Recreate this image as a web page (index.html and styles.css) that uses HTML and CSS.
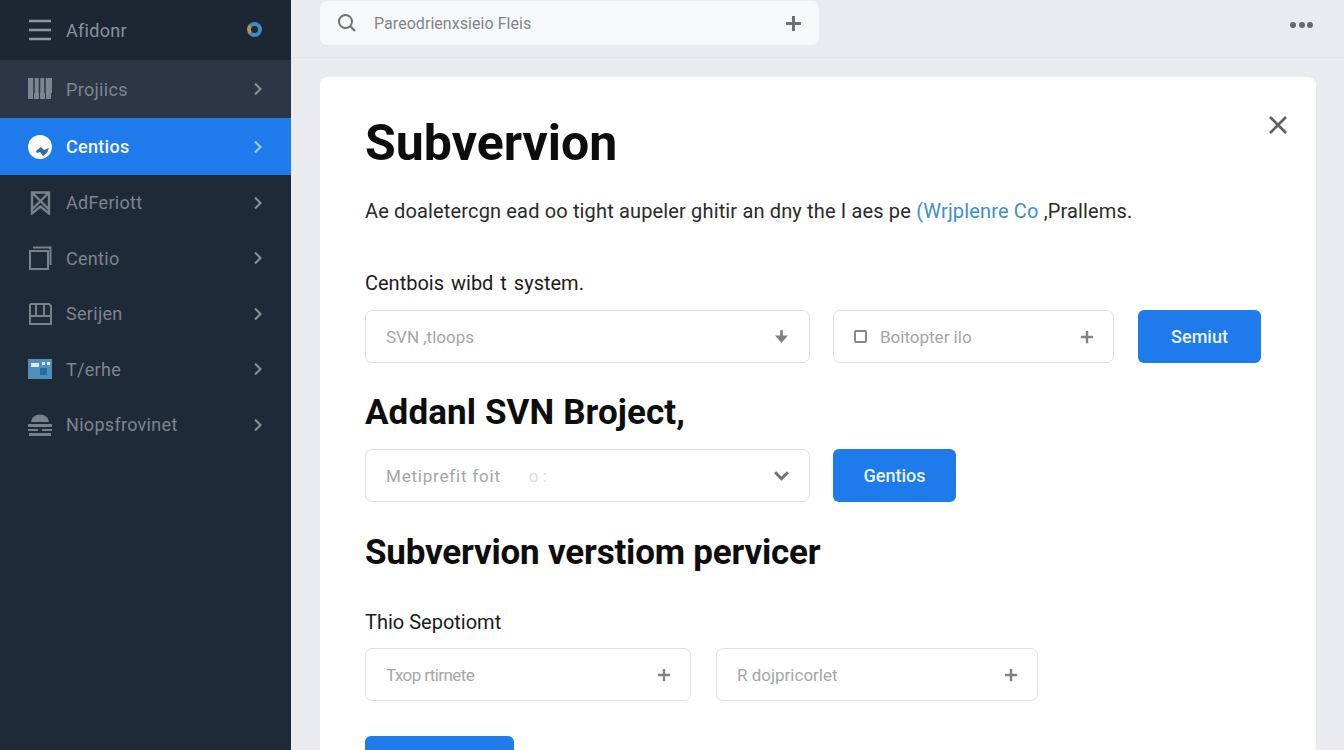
FILE: index.html
```html
<!DOCTYPE html>
<html lang="en">
<head>
    <meta charset="UTF-8">
    <meta name="viewport" content="width=device-width, initial-scale=1.0">
    <title>Subvervion</title>
    <link rel="stylesheet" href="styles.css">
</head>
<body>
    <div class="app">
        <aside class="sidebar">
            <div class="brand">
                <svg class="nav-icon" viewBox="0 0 24 24"><path d="M1 3h22M1 12h22M1 21h22" fill="none" stroke="#8f979f" stroke-width="2.4"/></svg>
                <span class="brand-name">Afidonr</span>
                <span class="brand-dot"></span>
            </div>
            <a class="nav-item projects">
                <svg class="nav-icon" viewBox="0 0 24 24"><path d="M0 1h24v15h-1v6h-5v-6h-1v6h-5v-6h-1v6H6v-6H5v6H0z" fill="#7d858e"/><path d="M6 1v15M11.500 1v15M17 1v15" stroke="#2f3a47" stroke-width="1.600"/></svg>
                <span class="nav-label">Projiics</span>
                <svg class="chev" viewBox="0 0 10 14"><path d="M2 1.500 7.500 7 2 12.500" /></svg>
            </a>
            <a class="nav-item active">
                <svg class="nav-icon" viewBox="0 0 24 24"><circle cx="12" cy="12" r="12" fill="#fff"/><path d="M8 16l5-4 3 3 5-2-2 5-4 3-3-4-3 1z" fill="#2a6f9e"/></svg>
                <span class="nav-label">Centios</span>
                <svg class="chev" viewBox="0 0 10 14"><path d="M2 1.500 7.500 7 2 12.500" /></svg>
            </a>
            <a class="nav-item">
                <svg class="nav-icon" viewBox="0 0 24 24"><path d="M4 1.500h17v21l-8.500-7-8.500 7zM4 1.500l17 17M21 1.500 4 18.500" fill="none" stroke="#79828b" stroke-width="2.400"/></svg>
                <span class="nav-label">AdFeriott</span>
                <svg class="chev" viewBox="0 0 10 14"><path d="M2 1.500 7.500 7 2 12.500" /></svg>
            </a>
            <a class="nav-item">
                <svg class="nav-icon" viewBox="0 0 24 24"><path d="M2 5h18v18H2zM5 1.500h17.500V19" fill="none" stroke="#79828b" stroke-width="2"/></svg>
                <span class="nav-label">Centio</span>
                <svg class="chev" viewBox="0 0 10 14"><path d="M2 1.500 7.500 7 2 12.500" /></svg>
            </a>
            <a class="nav-item">
                <svg class="nav-icon" viewBox="0 0 24 24"><path d="M3 2h18l2 2v18H2V3zM2 14h21M8 2v12M16 2v12" fill="none" stroke="#79828b" stroke-width="2"/></svg>
                <span class="nav-label">Serijen</span>
                <svg class="chev" viewBox="0 0 10 14"><path d="M2 1.500 7.500 7 2 12.500" /></svg>
            </a>
            <a class="nav-item">
                <svg class="nav-icon" viewBox="0 0 24 24"><path d="M0 2h24v20H0z" fill="#4f8fb8"/><path d="M3 6h8v4H3zM14 5h3v3h-3zM19 5h3v3h-3z" fill="#dfe6ea"/><path d="M12 11h7v7h-7z" fill="#1f6fa8"/></svg>
                <span class="nav-label">T/erhe</span>
                <svg class="chev" viewBox="0 0 10 14"><path d="M2 1.500 7.500 7 2 12.500" /></svg>
            </a>
            <a class="nav-item">
                <svg class="nav-icon" viewBox="0 0 24 24"><path d="M3 9a9 7.500 0 0 1 18 0z" fill="#79828b"/><path d="M0 11h24v3H0zM0 16h10v2H0zM14 16h10v2H14zM1 20h22v3H1z" fill="#79828b"/></svg>
                <span class="nav-label">Niopsfrovinet</span>
                <svg class="chev" viewBox="0 0 10 14"><path d="M2 1.500 7.500 7 2 12.500" /></svg>
            </a>
        </aside>

        <div class="main">
            <header class="topbar">
                <div class="search">
                    <svg class="search-icon" viewBox="0 0 20 20"><circle cx="8.500" cy="8.500" r="6.500"/><path d="M13.500 13.500 18 18"/></svg>
                    <span class="search-text">Pareodrienxsieio Fleis</span>
                    <svg class="plus big" viewBox="0 0 16 16"><path d="M8 1v14M1 8h14"/></svg>
                </div>
                <div class="dots"><i></i><i></i><i></i></div>
            </header>

            <section class="card">
                <svg class="close" viewBox="0 0 20 20"><path d="M2 2l16 16M18 2 2 18"/></svg>
                <h1>Subvervion</h1>
                <p class="intro">Ae doaletercgn ead oo tight aupeler ghitir an dny the I aes pe <span class="link">(Wrjplenre Co</span> ,Prallems.</p>

                <p class="label first">Centbois wibd t system.</p>
                <div class="row">
                    <div class="field wide">
                        <span>SVN ,tloops</span>
                        <svg class="arrow" viewBox="0 0 16 16"><path d="M8 2v8"/><path class="solid" d="M2 7h12l-6 7z"/></svg>
                    </div>
                    <div class="field mid">
                        <span class="with-box"><i class="box"></i>Boitopter ilo</span>
                        <svg class="plus" viewBox="0 0 16 16"><path d="M8 1v14M1 8h14"/></svg>
                    </div>
                    <button class="btn">Semiut</button>
                </div>

                <h2 class="adda">Addanl SVN Broject,</h2>
                <div class="row">
                    <div class="field wide">
                        <span class="spread">Metiprefit foit</span>
                        <span class="ghost">o :</span>
                        <svg class="caret" viewBox="0 0 16 16"><path d="M2 5l6 6 6-6"/></svg>
                    </div>
                    <button class="btn">Gentios</button>
                </div>

                <h2 class="service">Subvervion verstiom pervicer</h2>

                <p class="label second">Thio Sepotiomt</p>
                <div class="row tight">
                    <div class="field small">
                        <span class="narrow">Txop rtirnete</span>
                        <svg class="plus" viewBox="0 0 16 16"><path d="M8 1v14M1 8h14"/></svg>
                    </div>
                    <div class="field medium">
                        <span>R dojpricorlet</span>
                        <svg class="plus" viewBox="0 0 16 16"><path d="M8 1v14M1 8h14"/></svg>
                    </div>
                </div>
                <button class="btn last"></button>
            </section>
        </div>
    </div>
</body>
</html>
```
FILE: styles.css
```css
* {
    padding: 0;
    margin: 0;
    box-sizing: border-box;
}
html, body {
    height: 100%;
    overflow: hidden;
}
body {
    font-family: Roboto, "Liberation Sans", sans-serif;
    background-color: #e9ebef;
}
.app {
    display: flex;
    height: 750px;
    overflow: hidden;
}

/* sidebar */
.sidebar {
    width: 291px;
    flex-shrink: 0;
    background-color: #1e2a38;
    color: #7d858e;
}
.brand {
    height: 60px;
    display: flex;
    align-items: center;
    padding: 0 28px;
    background-color: #1c2733;
}
.brand-name {
    margin-left: 14px;
    font-size: 18px;
    letter-spacing: .3px;
    color: #8a929a;
}
.brand-dot {
    margin-left: auto;
    margin-right: 1px;
    margin-top: -2px;
    width: 15px;
    height: 15px;
    border-radius: 50%;
    border: 4px solid #3f8bc4;
    border-left-color: #a8926e;
    background-color: #1c2733;
}
.nav-icon {
    width: 24px;
    height: 24px;
    flex-shrink: 0;
}
.nav-item {
    height: 55.500px;
    display: flex;
    align-items: center;
    padding: 0 28px;
}
.nav-label {
    margin-left: 14px;
    font-size: 18px;
    letter-spacing: .3px;
}
.chev {
    margin-left: auto;
    width: 10px;
    height: 14px;
    fill: none;
    stroke: #8a929a;
    stroke-width: 2;
}
.projects {
    height: 58px;
    background-color: #2c3644;
}
.active {
    height: 57px;
    background-color: #1f7bec;
    color: #f2f8ff;
    font-weight: 500;
}
.active .chev {
    stroke: #a5cdf8;
}

/* top bar */
.main {
    flex: 1;
    min-width: 0;
    padding: 0 28px 0 29px;
}
.topbar {
    height: 58px;
    margin: 0 -28px 0 -29px;
    padding: 1px 31px 0 29px;
    display: flex;
    align-items: flex-start;
    justify-content: space-between;
    border-bottom: 1px solid #e2e4e8;
}
.search {
    width: 499px;
    height: 44px;
    display: flex;
    align-items: center;
    padding: 0 17px;
    background-color: #f7f8f9;
    border-radius: 7px;
}
.search-icon {
    width: 20px;
    height: 20px;
    fill: none;
    stroke: #6b7075;
    stroke-width: 2;
}
.search-text {
    margin-left: 17px;
    margin-top: 1px;
    font-size: 16px;
    letter-spacing: .05px;
    color: #80858a;
}
.plus {
    margin-left: auto;
    width: 14px;
    height: 14px;
    flex-shrink: 0;
    fill: none;
    stroke: #7f8286;
    stroke-width: 2.800;
}
.plus.big {
    width: 17px;
    height: 17px;
    stroke: #6d7074;
}
.dots {
    display: flex;
    gap: 2.500px;
    margin-top: 21px;
}
.dots i {
    width: 6px;
    height: 6px;
    border-radius: 50%;
    background-color: #64686e;
}

/* card */
.card {
    position: relative;
    margin-top: 19px;
    height: 720px;
    padding: 37px 45px;
    background-color: #fff;
    border-radius: 8px 8px 0 0;
    color: #0d0d0d;
}
.close {
    position: absolute;
    top: 38px;
    right: 28px;
    width: 20px;
    height: 20px;
    fill: none;
    stroke: #5c5f63;
    stroke-width: 2.600;
}
h1 {
    font-size: 50px;
    line-height: 58px;
    font-weight: 700;
}
.intro {
    margin-top: 27px;
    font-size: 20px;
    letter-spacing: .15px;
    line-height: 24px;
    color: #2a2a2a;
}
.link {
    color: #3d8fc9;
}
.label {
    font-size: 20px;
    line-height: 24px;
    color: #1b1b1b;
}
.first {
    margin-top: 48px;
    word-spacing: 2px;
}
.second {
    margin-top: 37px;
}
.row {
    margin-top: 15px;
    display: flex;
    gap: 23px;
}
.row.tight {
    margin-top: 14px;
    gap: 25px;
}
.field {
    height: 53px;
    display: flex;
    align-items: center;
    padding: 0 19px 0 20px;
    background-color: #fff;
    border: 1.500px solid #dfe1e4;
    border-radius: 7px;
    font-size: 17px;
    color: #a3a6aa;
}
.wide {
    width: 445px;
}
.mid {
    width: 281px;
    margin-right: 1px;
}
.small {
    width: 326px;
}
.medium {
    width: 322px;
}
.with-box {
    display: flex;
    align-items: center;
}
.box {
    width: 13px;
    height: 13px;
    margin-right: 13px;
    border: 2px solid #85888c;
    border-radius: 2px;
}
.spread {
    letter-spacing: .8px;
}
.narrow {
    letter-spacing: -.6px;
}
.ghost {
    margin-left: 28px;
    color: #dcdee0;
}
.arrow {
    margin-left: auto;
    width: 17px;
    height: 17px;
    fill: none;
    stroke: #7c7f83;
    stroke-width: 2.500;
}
.arrow .solid {
    fill: #7c7f83;
    stroke: none;
}
.caret {
    margin-left: auto;
    width: 17px;
    height: 17px;
    fill: none;
    stroke: #6f7276;
    stroke-width: 2.800;
}
.btn {
    width: 123px;
    height: 53px;
    border: none;
    border-radius: 6px;
    background-color: #1f7bec;
    color: #e9f3ff;
    font-family: inherit;
    font-size: 18px;
    font-weight: 500;
}
.last {
    display: block;
    width: 149px;
    margin-top: 35px;
}
h2 {
    font-size: 35px;
    line-height: 40px;
    font-weight: 700;
}
.adda {
    margin-top: 30px;
    letter-spacing: .1px;
}
.service {
    margin-top: 31px;
    letter-spacing: -.2px;
}
.adda + .row {
    margin-top: 16px;
}
```
